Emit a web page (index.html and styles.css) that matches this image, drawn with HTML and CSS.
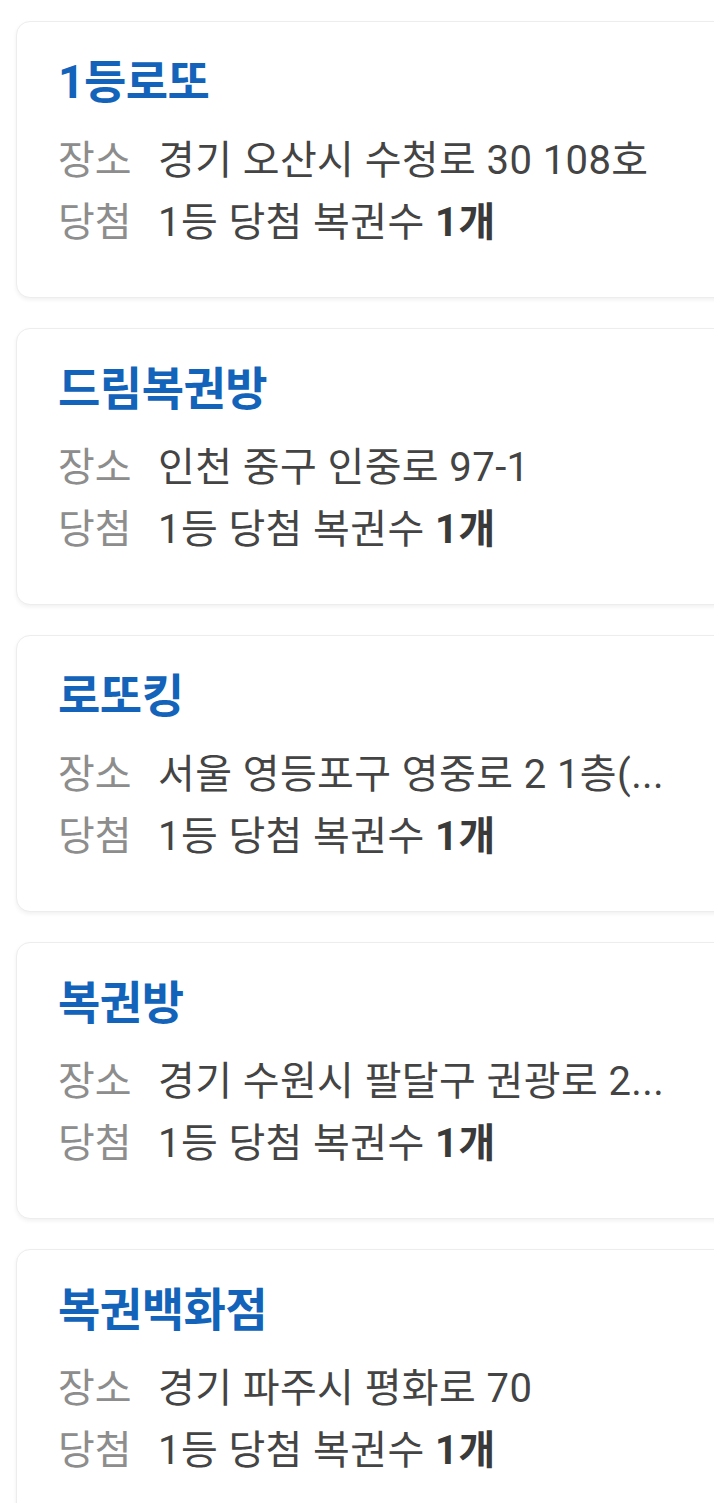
FILE: index.html
```html
<!DOCTYPE html>
<html lang="ko">
<head>
    <meta charset="UTF-8">
    <meta name="viewport" content="width=device-width, initial-scale=1.0">
    <title>1등 당첨 판매점</title>
    <link rel="stylesheet" href="styles.css">
</head>
<body>
    <div class="store-list">
        <div class="store-card">
            <h2 class="store-name">1등로또</h2>
            <div class="store-row">
                <span class="row-label">장소</span>
                <span class="row-value">경기 오산시 수청로 30 108호</span>
            </div>
            <div class="store-row">
                <span class="row-label">당첨</span>
                <span class="row-value">1등 당첨 복권수 <strong>1개</strong></span>
            </div>
        </div>

        <div class="store-card">
            <h2 class="store-name">드림복권방</h2>
            <div class="store-row">
                <span class="row-label">장소</span>
                <span class="row-value">인천 중구 인중로 97-1</span>
            </div>
            <div class="store-row">
                <span class="row-label">당첨</span>
                <span class="row-value">1등 당첨 복권수 <strong>1개</strong></span>
            </div>
        </div>

        <div class="store-card">
            <h2 class="store-name">로또킹</h2>
            <div class="store-row">
                <span class="row-label">장소</span>
                <span class="row-value">서울 영등포구 영중로 2 1층(...</span>
            </div>
            <div class="store-row">
                <span class="row-label">당첨</span>
                <span class="row-value">1등 당첨 복권수 <strong>1개</strong></span>
            </div>
        </div>

        <div class="store-card">
            <h2 class="store-name">복권방</h2>
            <div class="store-row">
                <span class="row-label">장소</span>
                <span class="row-value">경기 수원시 팔달구 권광로 2...</span>
            </div>
            <div class="store-row">
                <span class="row-label">당첨</span>
                <span class="row-value">1등 당첨 복권수 <strong>1개</strong></span>
            </div>
        </div>

        <div class="store-card">
            <h2 class="store-name">복권백화점</h2>
            <div class="store-row">
                <span class="row-label">장소</span>
                <span class="row-value">경기 파주시 평화로 70</span>
            </div>
            <div class="store-row">
                <span class="row-label">당첨</span>
                <span class="row-value">1등 당첨 복권수 <strong>1개</strong></span>
            </div>
        </div>
    </div>
</body>
</html>
```

FILE: styles.css
```css
body {
    margin: 0;
    background: #fff;
    font-family: Roboto, "Noto Sans CJK KR", sans-serif;
    overflow: hidden;
}
.store-list {
    display: flex;
    flex-direction: column;
    gap: 30px;
    padding: 21px 0 0 16px;
}
.store-card {
    width: 740px;
    box-sizing: border-box;
    padding: 35px 41px 47px;
    background: #fff;
    border: 1px solid #ededed;
    border-radius: 14px;
    box-shadow: 0 2px 4px rgba(0,0,0,0.06);
}
.store-name {
    margin: 0 0 19px;
    font-size: 46px;
    line-height: 50px;
    font-weight: 700;
    color: #1263b9;
    letter-spacing: -0.5px;
}
.store-row {
    display: flex;
    align-items: center;
    height: 62px;
    font-size: 40px;
    width: 640px;
}
.row-label {
    flex: none;
    width: 100px;
    color: #8d8d8d;
}
.row-value {
    flex: 1;
    min-width: 0;
    color: #444;
    letter-spacing: 0.4px;
    white-space: nowrap;
    overflow: hidden;
}
.row-value strong {
    color: #3a3a3a;
    font-weight: 700;
}
```
